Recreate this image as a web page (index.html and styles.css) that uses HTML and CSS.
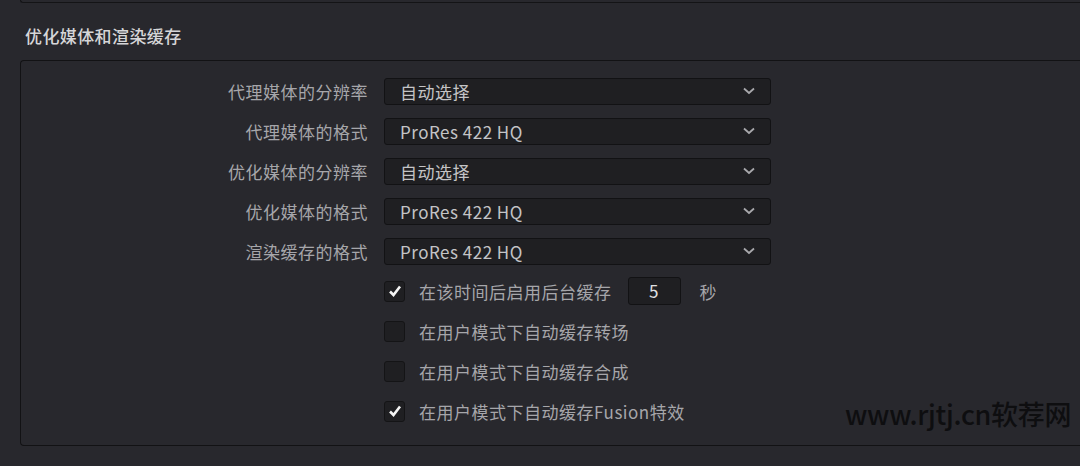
FILE: index.html
```html
<!DOCTYPE html>
<html lang="zh-CN">
<head>
    <meta charset="UTF-8">
    <title>优化媒体和渲染缓存</title>
    <link rel="stylesheet" href="styles.css">
</head>
<body>

    <div class="prev-panel"></div>

    <h2 class="section-title">优化媒体和渲染缓存</h2>

    <div class="panel">
        <div class="grid">
            <label class="label">代理媒体的分辨率</label>
            <div class="select"><span>自动选择</span><svg class="chev" viewBox="0 0 12 8"><path d="M1 1.5 L6 6 L11 1.5"/></svg></div>

            <label class="label">代理媒体的格式</label>
            <div class="select"><span>ProRes 422 HQ</span><svg class="chev" viewBox="0 0 12 8"><path d="M1 1.5 L6 6 L11 1.5"/></svg></div>

            <label class="label">优化媒体的分辨率</label>
            <div class="select"><span>自动选择</span><svg class="chev" viewBox="0 0 12 8"><path d="M1 1.5 L6 6 L11 1.5"/></svg></div>

            <label class="label">优化媒体的格式</label>
            <div class="select"><span>ProRes 422 HQ</span><svg class="chev" viewBox="0 0 12 8"><path d="M1 1.5 L6 6 L11 1.5"/></svg></div>

            <label class="label">渲染缓存的格式</label>
            <div class="select"><span>ProRes 422 HQ</span><svg class="chev" viewBox="0 0 12 8"><path d="M1 1.5 L6 6 L11 1.5"/></svg></div>

            <div></div>
            <div class="check-row">
                <span class="box"><svg class="tick" viewBox="0 0 14 14"><path d="M2 7.5 L5.5 11 L12 2.5"/></svg></span>
                <span class="check-text">在该时间后启用后台缓存</span>
                <span class="num">5</span>
                <span class="unit">秒</span>
            </div>

            <div></div>
            <div class="check-row">
                <span class="box"></span>
                <span class="check-text">在用户模式下自动缓存转场</span>
            </div>

            <div></div>
            <div class="check-row">
                <span class="box"></span>
                <span class="check-text">在用户模式下自动缓存合成</span>
            </div>

            <div></div>
            <div class="check-row">
                <span class="box"><svg class="tick" viewBox="0 0 14 14"><path d="M2 7.5 L5.5 11 L12 2.5"/></svg></span>
                <span class="check-text">在用户模式下自动缓存Fusion特效</span>
            </div>
        </div>
    </div>

    <div class="watermark">www.rjtj.cn软荐网</div>

</body>
</html>
```

FILE: styles.css
```css
body {
    margin: 0;
    height: 466px;
    overflow: hidden;
    background-color: #28282d;
    font-family: "Noto Sans CJK SC", "Noto Sans", sans-serif;
    position: relative;
}
.prev-panel {
    margin-left: 20px;
    height: 2px;
    border-left: 1px solid #141416;
    border-bottom: 1px solid #141416;
    border-bottom-left-radius: 4px;
}
.section-title {
    margin: 0;
    padding: 21px 0 0 25px;
    height: 36px;
    font-size: 17px;
    font-weight: 500;
    line-height: 24px;
    letter-spacing: 0.4px;
    color: #d6d6d8;
}
.panel {
    margin-left: 20px;
    height: 374px;
    padding: 10px 0 0;
    border: 1px solid #121214;
    border-right: none;
    border-radius: 4px 0 0 4px;
}
.grid {
    display: grid;
    grid-template-columns: 347px 387px;
    grid-auto-rows: 40px;
    column-gap: 16px;
    align-items: center;
}
.label {
    text-align: right;
    font-size: 17px;
    letter-spacing: 0.5px;
    color: #a6a6aa;
}
.select {
    height: 25px;
    border: 1px solid #121214;
    border-radius: 3px;
    background-color: #1f1f22;
    display: flex;
    align-items: center;
    justify-content: space-between;
    padding: 0 15px 0 15px;
    font-size: 17px;
    letter-spacing: 0.5px;
    color: #c4c4c6;
}
.chev {
    width: 12px;
    height: 8px;
    fill: none;
    stroke: #a8a8ac;
    stroke-width: 1.8;
}
.check-row {
    display: flex;
    align-items: center;
    font-size: 17px;
    letter-spacing: 0.5px;
    color: #a6a6aa;
}
.box {
    width: 19px;
    height: 19px;
    border: 1px solid #141416;
    border-radius: 3px;
    background-color: #1f1f22;
    display: flex;
    align-items: center;
    justify-content: center;
    margin-right: 14px;
}
.tick {
    width: 14px;
    height: 14px;
    fill: none;
    stroke: #f4f4f4;
    stroke-width: 2.6;
}
.num {
    margin-left: 16px;
    width: 51px;
    height: 26px;
    border: 1px solid #121214;
    border-radius: 3px;
    background-color: #1f1f22;
    color: #e0e0e2;
    text-align: center;
    line-height: 26px;
}
.unit {
    margin-left: 19px;
}
.watermark {
    position: absolute;
    left: 845px;
    top: 394px;
    font-size: 27px;
    font-weight: 500;
    color: #0e0e10;
    letter-spacing: -0.3px;
}
```
